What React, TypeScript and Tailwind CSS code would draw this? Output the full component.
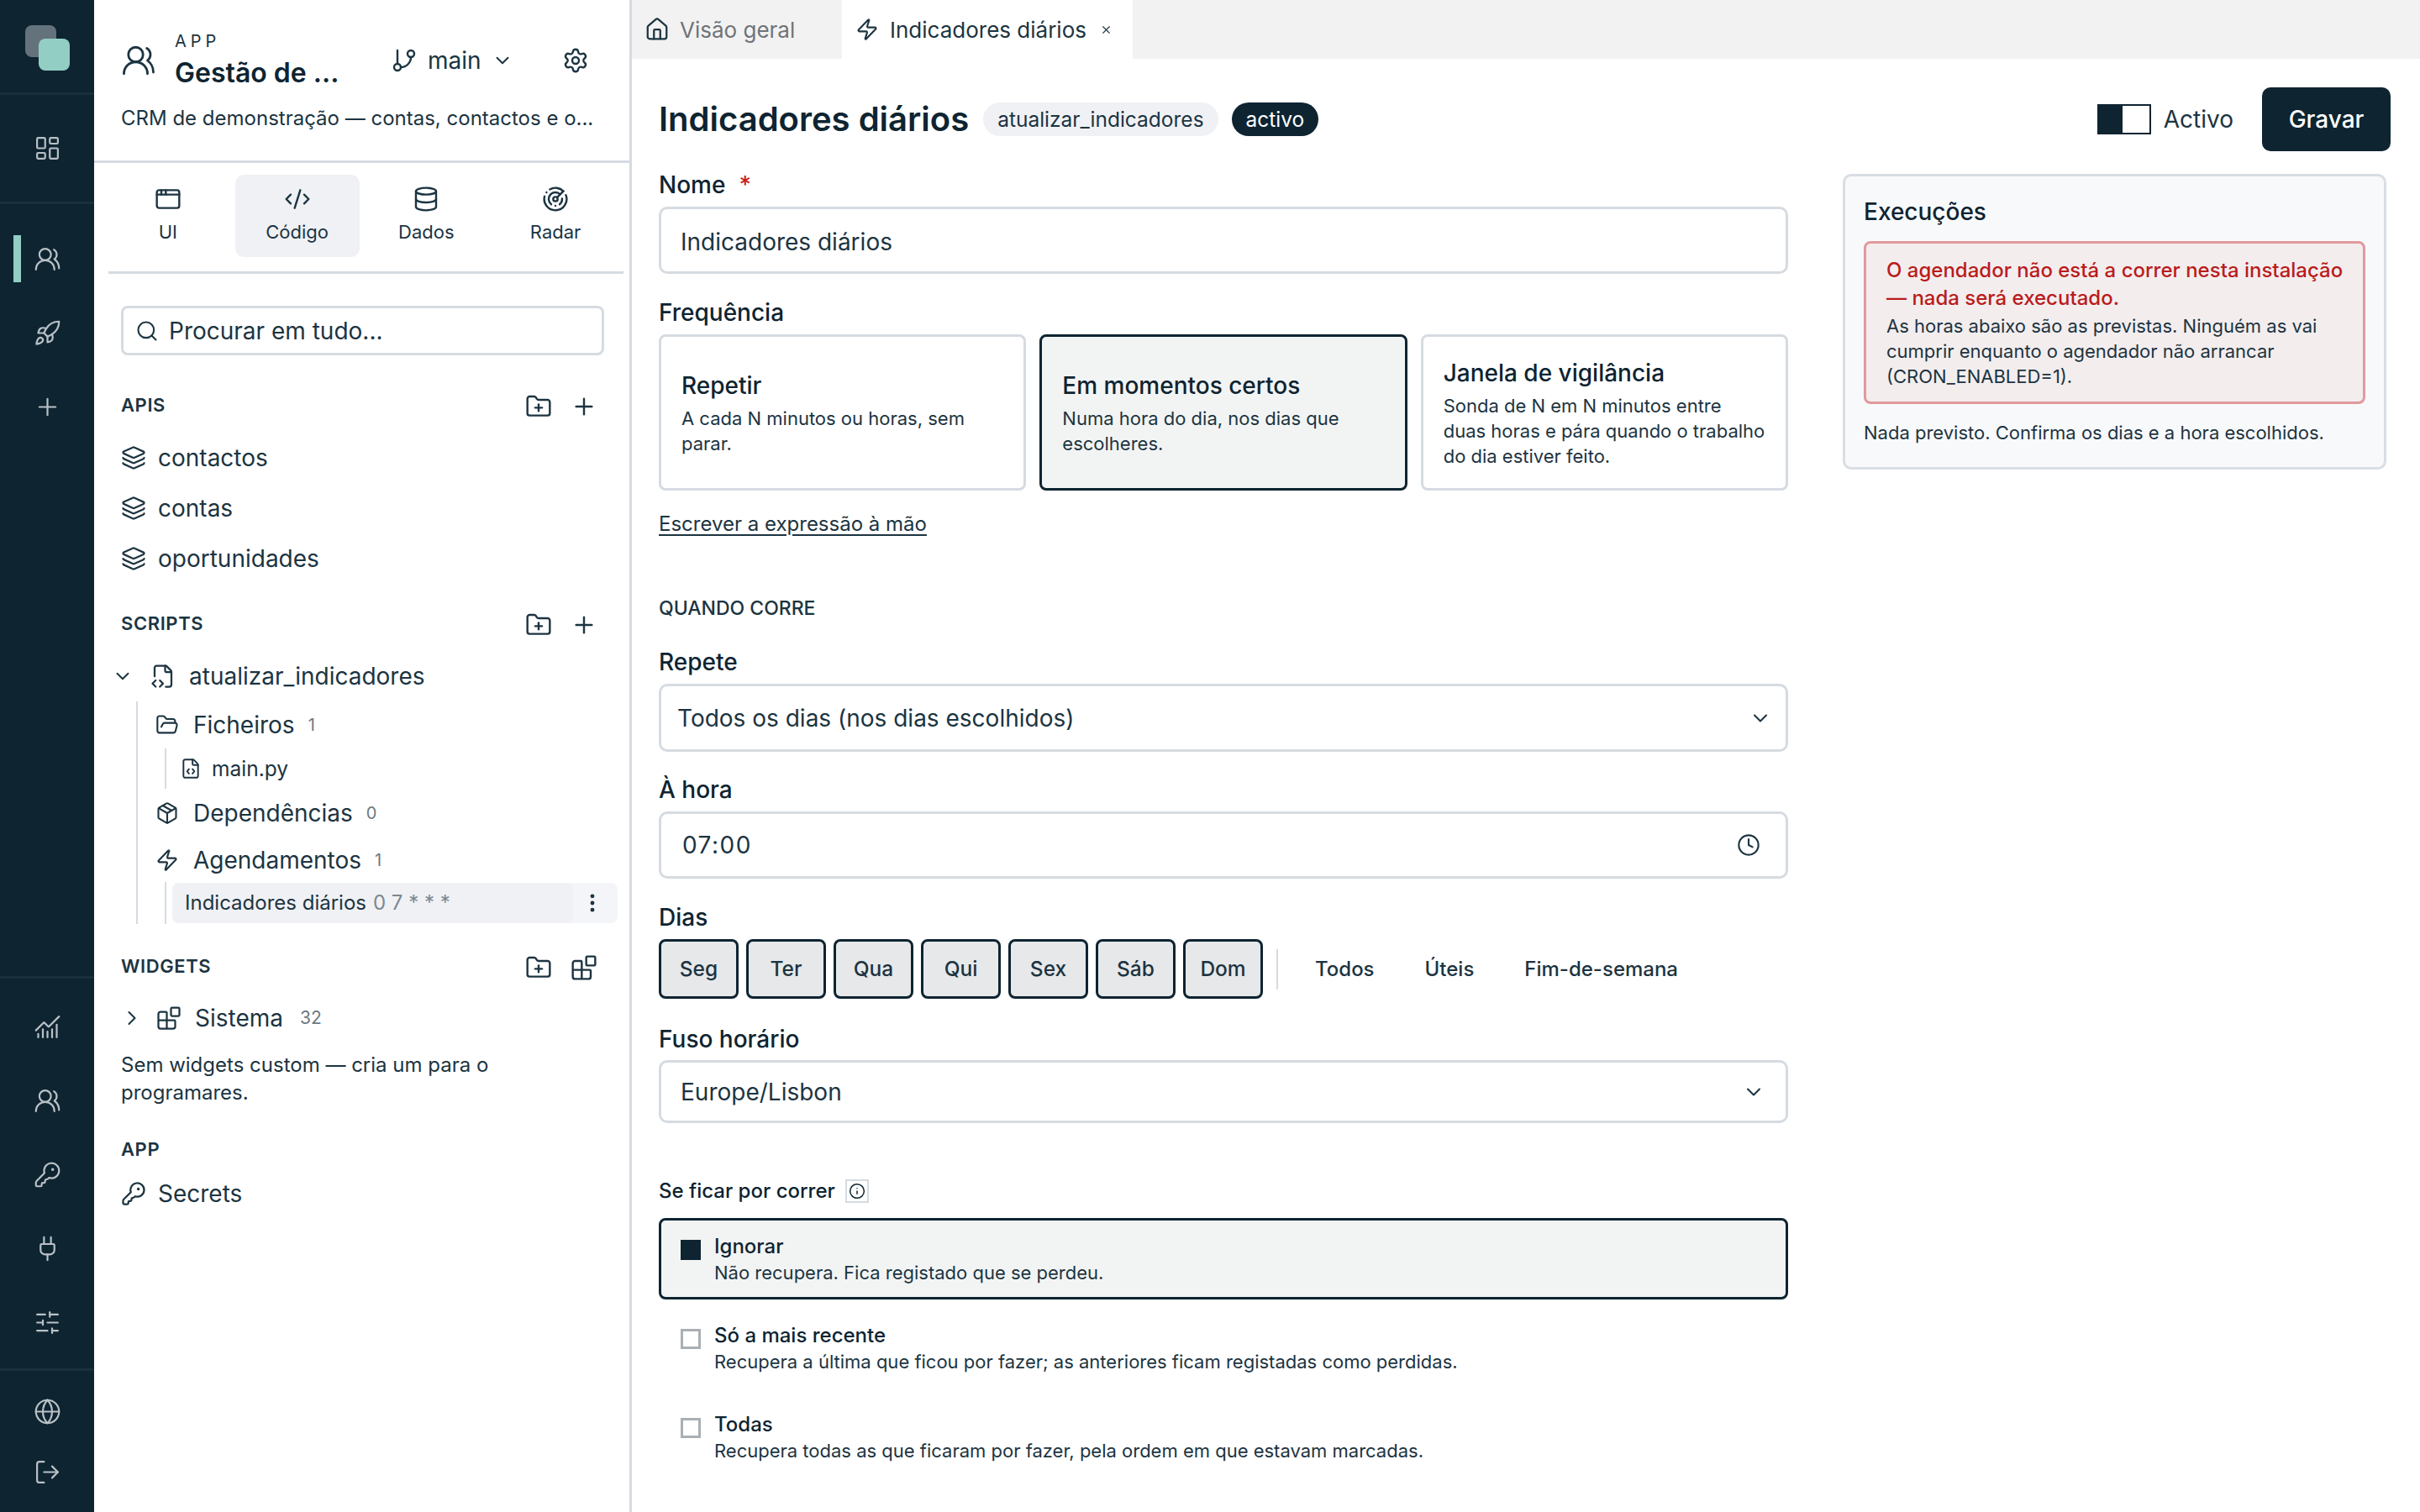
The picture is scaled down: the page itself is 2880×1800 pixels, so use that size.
import {
  AppWindow,
  Blocks,
  ChartNoAxesCombined,
  ChevronDown,
  ChevronRight,
  Clock,
  CodeXml,
  Database,
  EllipsisVertical,
  FileCode,
  FileCodeCorner,
  FolderOpen,
  FolderPlus,
  GitBranch,
  Globe,
  House,
  Info,
  KeyRound,
  Layers,
  LayoutDashboard,
  LogOut,
  Package,
  Plug,
  Plus,
  Radar,
  Rocket,
  Search,
  Settings,
  SlidersHorizontal,
  UsersRound,
  X,
  Zap,
} from "lucide-react";
import type { ReactNode } from "react";

const days = ["Seg", "Ter", "Qua", "Qui", "Sex", "Sáb", "Dom"];

const catchUp = [
  { title: "Ignorar", text: "Não recupera. Fica registado que se perdeu.", active: true },
  { title: "Só a mais recente", text: "Recupera a última que ficou por fazer; as anteriores ficam registadas como perdidas.", active: false },
  { title: "Todas", text: "Recupera todas as que ficaram por fazer, pela ordem em que estavam marcadas.", active: false },
];

function RailItem({ children, active }: { children: ReactNode; active?: boolean }) {
  return (
    <div className="relative flex h-[88px] items-center justify-center text-[#b9c1c6]">
      {active && <div className="absolute left-[16px] top-[16px] h-[56px] w-[9px] bg-[#93cec5]" />}
      {children}
    </div>
  );
}

function Rail() {
  return (
    <div className="flex h-full w-[112px] shrink-0 flex-col bg-[#0e2431]">
      <div className="flex h-[113px] items-start border-b-[3px] border-[#18303d] pl-[30px] pt-[30px]">
        <div className="relative h-[54px] w-[53px]">
          <div className="h-[38px] w-[37px] rounded-[8px] bg-[#64727c]" />
          <div className="absolute left-[16px] top-[16px] h-[38px] w-[37px] rounded-[8px] bg-[#93cec5]" />
        </div>
      </div>
      <div className="flex h-[130px] items-center justify-center border-b-[3px] border-[#18303d] text-[#b9c1c6]">
        <LayoutDashboard size={33} strokeWidth={1.6} />
      </div>
      <div className="pt-[21px]">
        <RailItem active>
          <UsersRound size={33} strokeWidth={1.6} />
        </RailItem>
        <RailItem>
          <Rocket size={33} strokeWidth={1.6} />
        </RailItem>
        <RailItem>
          <Plus size={33} strokeWidth={1.6} />
        </RailItem>
      </div>
      <div className="flex-1" />
      <div className="border-t-[3px] border-[#18303d] pb-[11px] pt-[13px]">
        <RailItem>
          <ChartNoAxesCombined size={33} strokeWidth={1.6} />
        </RailItem>
        <RailItem>
          <UsersRound size={33} strokeWidth={1.6} />
        </RailItem>
        <RailItem>
          <KeyRound size={33} strokeWidth={1.6} />
        </RailItem>
        <RailItem>
          <Plug size={33} strokeWidth={1.6} />
        </RailItem>
        <RailItem>
          <SlidersHorizontal size={33} strokeWidth={1.6} />
        </RailItem>
      </div>
      <div className="border-t-[3px] border-[#18303d] py-[12px] text-[#b9c1c6]">
        <div className="flex h-[72px] items-center justify-center">
          <Globe size={33} strokeWidth={1.6} />
        </div>
        <div className="flex h-[72px] items-center justify-center">
          <LogOut size={33} strokeWidth={1.6} />
        </div>
      </div>
    </div>
  );
}

function SectionHead({ label, last }: { label: string; last?: ReactNode }) {
  return (
    <div className="flex h-[40px] items-center justify-between pl-[32px] pr-[38px]">
      <span className="text-[22px] font-semibold tracking-[0.6px]">{label}</span>
      <div className="flex items-center gap-[22px] pt-[3px]">
        <FolderPlus size={32} strokeWidth={1.8} />
        {last ?? <Plus size={32} strokeWidth={1.8} />}
      </div>
    </div>
  );
}

function ApiRow({ label }: { label: string }) {
  return (
    <div className="flex h-[60px] items-center gap-[14px] pl-[32px] text-[28px]">
      <Layers size={30} strokeWidth={1.8} />
      {label}
    </div>
  );
}

function TreeRow({ icon, label, count, height }: { icon: ReactNode; label: string; count: string; height: string }) {
  return (
    <div className={`flex items-center pl-[21px] text-[28px] ${height}`}>
      <span className="mr-[17px] flex w-[28px] justify-center">{icon}</span>
      {label}
      <span className="ml-[16px] text-[20px] text-[#6b7a84]">{count}</span>
    </div>
  );
}

function Sidebar() {
  return (
    <div className="h-full w-[640px] shrink-0 border-r-[3px] border-[#d5dbe1] text-[#1c3441]">
      <div className="h-[194px] border-b-[3px] border-[#d5dbe1] pl-[32px]">
        <div className="flex h-[113px] items-center pt-[30px]">
          <UsersRound size={42} strokeWidth={1.6} />
          <div className="ml-[22px] w-[240px]">
            <div className="text-[20px] leading-[24px] tracking-[0.25em]">APP</div>
            <div className="mt-[6px] text-[32px] font-semibold leading-[40px] text-[#0e2431]">Gestão de ...</div>
          </div>
          <GitBranch size={32} strokeWidth={1.8} className="ml-[17px]" />
          <span className="ml-[12px] text-[28px]">main</span>
          <ChevronDown size={26} strokeWidth={1.8} className="ml-[12px]" />
          <Settings size={32} strokeWidth={1.8} className="ml-[58px]" />
        </div>
        <div className="mt-[12px] whitespace-nowrap text-[24px] leading-[32px]">CRM de demonstração — contas, contactos e o...</div>
      </div>

      <div className="ml-[11px] grid w-[615px] grid-cols-4 pt-[14px]">
        {[
          { label: "UI", icon: <AppWindow size={32} strokeWidth={1.8} /> },
          { label: "Código", icon: <CodeXml size={32} strokeWidth={1.8} />, active: true },
          { label: "Dados", icon: <Database size={32} strokeWidth={1.8} /> },
          { label: "Radar", icon: <Radar size={32} strokeWidth={1.8} /> },
        ].map((tab) => (
          <div key={tab.label} className="px-[3px]">
            <div className={`flex h-[98px] flex-col items-center justify-center gap-[8px] rounded-[10px] pb-[2px] text-[22px] leading-[30px] ${tab.active ? "bg-[#f0f1f5]" : ""}`}>
              {tab.icon}
              {tab.label}
            </div>
          </div>
        ))}
      </div>
      <div className="ml-[17px] mr-[7px] mt-[17px] h-[3px] bg-[#d5dbe1]" />

      <div className="ml-[32px] mt-[38px] flex h-[59px] w-[575px] items-center gap-[12px] rounded-[8px] border-[3px] border-[#d5dbe1] pl-[14px] text-[28px]">
        <Search size={28} strokeWidth={1.8} />
        Procurar em tudo...
      </div>

      <div className="mt-[39px]">
        <SectionHead label="APIS" />
      </div>
      <div className="mt-[13px]">
        <ApiRow label="contactos" />
        <ApiRow label="contas" />
        <ApiRow label="oportunidades" />
      </div>

      <div className="mt-[27px]">
        <SectionHead label="SCRIPTS" />
      </div>
      <div className="mt-[13px] flex h-[60px] items-center pl-[21px] text-[28px]">
        <ChevronDown size={26} strokeWidth={1.8} />
        <FileCodeCorner size={30} strokeWidth={1.8} className="ml-[20px]" />
        <span className="ml-[16px]">atualizar_indicadores</span>
      </div>
      <div className="ml-[50px] border-l-2 border-[#d5dbe1]">
        <TreeRow icon={<FolderOpen size={30} strokeWidth={1.8} />} label="Ficheiros" count="1" height="h-[56px]" />
        <div className="ml-[32px] flex h-[48px] items-center border-l-2 border-[#d5dbe1] pl-[16px] text-[24.5px]">
          <FileCode size={26} strokeWidth={1.8} />
          <span className="ml-[12px]">main.py</span>
        </div>
        <TreeRow icon={<Package size={30} strokeWidth={1.8} />} label="Dependências" count="0" height="h-[58px]" />
        <TreeRow icon={<Zap size={30} strokeWidth={1.8} />} label="Agendamentos" count="1" height="h-[53px]" />
        <div className="ml-[32px] flex h-[50px] items-center border-l-2 border-[#d5dbe1] pl-[7px]">
          <div className="flex h-[48px] w-[530px] items-center rounded-[8px] bg-[#f4f5f8]">
            <div className="flex h-full w-[477px] items-center rounded-[8px] bg-[#f0f1f5] pl-[15px] text-[24px]">
              Indicadores diários
              <span className="ml-[8px] text-[#7b8890]">0 7 * * *</span>
            </div>
            <EllipsisVertical size={28} strokeWidth={2.2} className="ml-[9px]" />
          </div>
        </div>
      </div>

      <div className="mt-[30px]">
        <SectionHead label="WIDGETS" last={<Blocks size={32} strokeWidth={1.8} />} />
      </div>
      <div className="mt-[15px] flex h-[54px] items-center pl-[31px] text-[28px]">
        <ChevronRight size={28} strokeWidth={1.8} />
        <Blocks size={30} strokeWidth={1.8} className="ml-[15px]" />
        <span className="ml-[16px]">Sistema</span>
        <span className="ml-[20px] text-[21px] text-[#6b7a84]">32</span>
      </div>
      <p className="ml-[32px] mt-[12px] w-[520px] text-[24px] leading-[33px]">Sem widgets custom — cria um para o programares.</p>
      <div className="ml-[32px] mt-[31px] flex h-[40px] items-center text-[22px] font-semibold tracking-[0.6px]">APP</div>
      <div className="mt-[8px] flex h-[50px] items-center gap-[14px] pl-[32px] text-[28px]">
        <KeyRound size={30} strokeWidth={1.8} />
        Secrets
      </div>
    </div>
  );
}

function Label({ children, className }: { children: ReactNode; className: string }) {
  return <div className={`flex h-[40px] items-center text-[28px] font-medium text-[#0e2431] ${className}`}>{children}</div>;
}

function Field({ children, className }: { children: ReactNode; className: string }) {
  return <div className={`flex items-center justify-between rounded-[10px] border-[3px] border-[#d5dbe1] text-[28px] text-[#1c3441] ${className}`}>{children}</div>;
}

function FreqCard({ title, text, active }: { title: string; text: string; active?: boolean }) {
  return (
    <div className={`flex flex-col justify-center rounded-[8px] border-[3px] px-[24px] ${active ? "border-[#0e2431] bg-[#f2f4f4]" : "border-[#d5dbe1]"}`}>
      <div className="pt-[2px] text-[28px] font-medium leading-[36px] text-[#0e2431]">{title}</div>
      <div className="mt-[6px] text-[22px] leading-[30px] text-[#1c3441]">{text}</div>
    </div>
  );
}

function Form() {
  return (
    <div className="w-[1344px] shrink-0">
      <Label className="mt-[20px]">
        Nome <span className="ml-[16px] text-[#c81e1e]">*</span>
      </Label>
      <Field className="mt-[6px] h-[80px] pl-[23px] pt-[3px]">Indicadores diários</Field>

      <Label className="mt-[26px]">Frequência</Label>
      <div className="mt-[6px] grid h-[186px] grid-cols-3 gap-[16px]">
        <FreqCard title="Repetir" text="A cada N minutos ou horas, sem parar." />
        <FreqCard active title="Em momentos certos" text="Numa hora do dia, nos dias que escolheres." />
        <FreqCard title="Janela de vigilância" text="Sonda de N em N minutos entre duas horas e pára quando o trabalho do dia estiver feito." />
      </div>
      <div className="mt-[20px] flex h-[40px] items-center text-[24px] text-[#1c3441] underline underline-offset-4">Escrever a expressão à mão</div>

      <div className="mt-[60px] flex h-[40px] items-center text-[23px] font-medium uppercase text-[#1c3441]">Quando corre</div>

      <Label className="mt-[24px]">Repete</Label>
      <Field className="mt-[6px] h-[81px] pl-[19px] pr-[16px]">
        Todos os dias (nos dias escolhidos)
        <ChevronDown size={28} strokeWidth={1.8} />
      </Field>

      <Label className="mt-[25px]">À hora</Label>
      <Field className="mt-[6px] h-[80px] pl-[25px] pr-[30px] tracking-[1.5px]">
        07:00
        <Clock size={28} strokeWidth={1.8} />
      </Field>

      <Label className="mt-[26px]">Dias</Label>
      <div className="mt-[6px] flex items-center gap-[9px]">
        {days.map((day) => (
          <div key={day} className="flex h-[71px] w-[95px] items-center justify-center rounded-[8px] border-[3px] border-[#0e2431] bg-[#e7e8ea] text-[24.5px] font-medium text-[#1c3441]">
            {day}
          </div>
        ))}
        <div className="ml-[7px] h-[48px] w-[2px] bg-[#d5dbe1]" />
        <div className="ml-[5px] flex items-center text-[24px] font-medium text-[#1c3441]">
          <span className="px-[30px]">Todos</span>
          <span className="px-[30px]">Úteis</span>
          <span className="px-[30px]">Fim-de-semana</span>
        </div>
      </div>

      <Label className="mt-[28px]">Fuso horário</Label>
      <Field className="mt-[5px] h-[75px] pl-[23px] pr-[24px]">
        Europe/Lisbon
        <ChevronDown size={28} strokeWidth={1.8} />
      </Field>

      <div className="mt-[61px] flex h-[40px] items-center text-[24px] font-medium text-[#0e2431]">
        Se ficar por correr
        <span className="ml-[12px] flex h-[28px] w-[28px] items-center justify-center border-2 border-[#d5dbe1]">
          <Info size={20} strokeWidth={1.8} />
        </span>
      </div>

      <div className="mt-[12px] flex flex-col gap-[9px]">
        {catchUp.map((item) => (
          <div key={item.title} className={`flex h-[97px] rounded-[8px] border-[3px] pl-[23px] ${item.active ? "border-[#0e2431] bg-[#f2f4f4]" : "border-transparent"}`}>
            <div className={`mt-[23px] h-[24px] w-[24px] shrink-0 ${item.active ? "bg-[#0e2431]" : "border-[3px] border-[#a9afb5]"}`} />
            <div className="ml-[16px] pt-[15px]">
              <div className="text-[24px] font-medium leading-[32px] text-[#0e2431]">{item.title}</div>
              <div className="text-[22px] leading-[30px] text-[#1c3441]">{item.text}</div>
            </div>
          </div>
        ))}
      </div>
    </div>
  );
}

function Executions() {
  return (
    <div className="ml-[65px] mt-[27px] h-[352px] w-[647px] rounded-[10px] border-[3px] border-[#d8dee4] bg-[#f8f9fb] px-[22px]">
      <div className="mt-[22px] text-[28px] font-medium leading-[40px] text-[#0e2431]">Execuções</div>
      <div className="mt-[15px] h-[194px] rounded-[8px] border-[3px] border-[#e09a9c] bg-[#f3edee] pl-[24px] pr-[10px] pt-[15px]">
        <div className="text-[24px] font-medium leading-[33px] text-[#b91c1c]">O agendador não está a correr nesta instalação — nada será executado.</div>
        <div className="mt-[2px] w-[545px] text-[22px] leading-[30px] text-[#1c3441]">As horas abaixo são as previstas. Ninguém as vai cumprir enquanto o agendador não arrancar (CRON_ENABLED=1).</div>
      </div>
      <div className="mt-[19px] text-[22px] leading-[30px] text-[#1c3441]">Nada previsto. Confirma os dias e a hora escolhidos.</div>
    </div>
  );
}

export default function App() {
  return (
    <div className="flex h-screen w-full overflow-hidden bg-white font-[Inter,sans-serif]">
      <Rail />
      <Sidebar />
      <div className="min-w-0 flex-1">
        <div className="flex h-[70px] bg-[#f2f2f2]">
          <div className="flex w-[250px] items-center gap-[12px] pl-[15px] text-[26px] text-[#6f7478]">
            <House size={30} strokeWidth={1.8} className="text-[#1c3441]" />
            Visão geral
          </div>
          <div className="flex w-[346px] items-center bg-white pl-[16px] text-[26px] text-[#1c3441]">
            <Zap size={28} strokeWidth={1.8} />
            <span className="ml-[13px]">Indicadores diários</span>
            <X size={15} strokeWidth={1.8} className="ml-[16px]" />
          </div>
        </div>

        <div className="pl-[32px] pr-[35px]">
          <div className="flex items-center pt-[34px]">
            <h1 className="text-[40px] font-semibold leading-[76px] text-[#0e2431]">Indicadores diários</h1>
            <span className="ml-[17px] flex h-[40px] items-center rounded-full bg-[#f0f1f5] px-[17px] text-[24.5px] text-[#1c3441]">atualizar_indicadores</span>
            <span className="ml-[16px] flex h-[40px] items-center rounded-full bg-[#0e2431] px-[17px] text-[24.5px] text-white">activo</span>
            <div className="ml-auto flex items-center">
              <div className="flex h-[36px] w-[64px] border-2 border-[#0e2431]">
                <div className="w-[28px] bg-[#0e2431]" />
              </div>
              <span className="ml-[15px] text-[28px] text-[#1c3441]">Activo</span>
              <button className="ml-[34px] h-[76px] w-[153px] rounded-[10px] bg-[#0e2431] text-[28px] font-medium text-white">Gravar</button>
            </div>
          </div>
          <div className="flex items-start">
            <Form />
            <Executions />
          </div>
        </div>
      </div>
    </div>
  );
}
